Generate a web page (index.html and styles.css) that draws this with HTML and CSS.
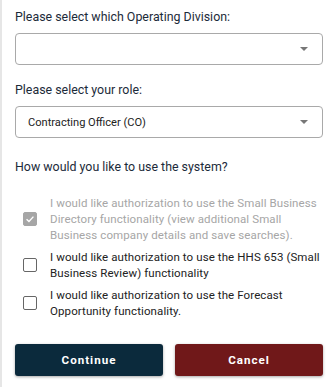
FILE: index.html
```html
<!DOCTYPE html>
<html>
<head>
<meta charset="utf-8">
<link rel="stylesheet" href="styles.css">
</head>
<body>
<div class="panel">
  <label class="field-label">Please select which Operating Division:</label>
  <div class="select">
    <span class="select-value"></span>
    <span class="caret"></span>
  </div>
  <label class="field-label second">Please select your role:</label>
  <div class="select">
    <span class="select-value">Contracting Officer (CO)</span>
    <span class="caret"></span>
  </div>
  <div class="question">How would you like to use the system?</div>
  <div class="options">
    <div class="option disabled">
      <span class="box checked">
        <svg viewBox="0 0 14 14" width="14" height="14"><path d="M3 7.2 L5.8 10 L11 4.2" fill="none" stroke="#fff" stroke-width="1.6"/></svg>
      </span>
      <span class="option-text">I would like authorization to use the Small Business Directory functionality (view additional Small Business company details and save searches).</span>
    </div>
    <div class="option">
      <span class="box"></span>
      <span class="option-text">I would like authorization to use the HHS 653 (Small Business Review) functionality</span>
    </div>
    <div class="option">
      <span class="box"></span>
      <span class="option-text">I would like authorization to use the Forecast Opportunity functionality.</span>
    </div>
  </div>
  <div class="buttons">
    <button class="btn primary">Continue</button>
    <button class="btn danger">Cancel</button>
  </div>
</div>
</body>
</html>
```
FILE: styles.css
```css
html, body {
  margin: 0;
  padding: 0;
  background: #fff;
}
body {
  font-family: Roboto, "Liberation Sans", Arial, sans-serif;
}
.panel {
  border-left: 2px solid #e6e6e6;
  padding: 8px 13px 12px 13px;
  height: 387px;
  box-sizing: border-box;
}
.field-label {
  display: block;
  font-size: 12.4px;
  color: #1c2b3a;
  line-height: 17px;
  margin-bottom: 8px;
}
.field-label.second {
  margin-top: 16px;
}
.select {
  height: 32px;
  border: 1px solid #a9a9a9;
  border-radius: 4px;
  box-sizing: border-box;
  display: flex;
  align-items: center;
  justify-content: space-between;
  padding: 0 14px 0 12px;
}
.select-value {
  font-size: 11.1px;
  color: #222;
}
.caret {
  width: 0;
  height: 0;
  border-left: 4px solid transparent;
  border-right: 4px solid transparent;
  border-top: 4px solid #777;
}
.question {
  font-size: 12.4px;
  color: #1c2b3a;
  line-height: 17px;
  margin-top: 20px;
}
.options {
  margin-top: 20px;
  display: flex;
  flex-direction: column;
  gap: 6px;
  padding-left: 8px;
}
.option {
  display: flex;
  align-items: center;
  gap: 13px;
}
.option-text {
  font-size: 11.5px;
  line-height: 16px;
  color: #222;
  letter-spacing: 0.1px;
}
.option.disabled .option-text {
  color: #a6a6a6;
}
.box {
  flex: none;
  width: 14px;
  height: 14px;
  box-sizing: border-box;
  border: 1px solid #666;
  border-radius: 2px;
  background: #fff;
  display: flex;
  align-items: center;
  justify-content: center;
}
.box.checked {
  background: #a6a6a6;
  border-color: #a6a6a6;
}
.buttons {
  display: flex;
  gap: 12px;
  margin-top: 25px;
}
.btn {
  flex: 1;
  height: 32px;
  border: none;
  border-radius: 3px;
  color: #fff;
  font-family: Roboto, "Liberation Sans", Arial, sans-serif;
  font-size: 11.6px;
  font-weight: 700;
  letter-spacing: 1px;
  box-shadow: 0 1px 3px rgba(0,0,0,0.35);
}
.btn.primary {
  background: #0b2a3c;
}
.btn.danger {
  background: #701819;
}
```
